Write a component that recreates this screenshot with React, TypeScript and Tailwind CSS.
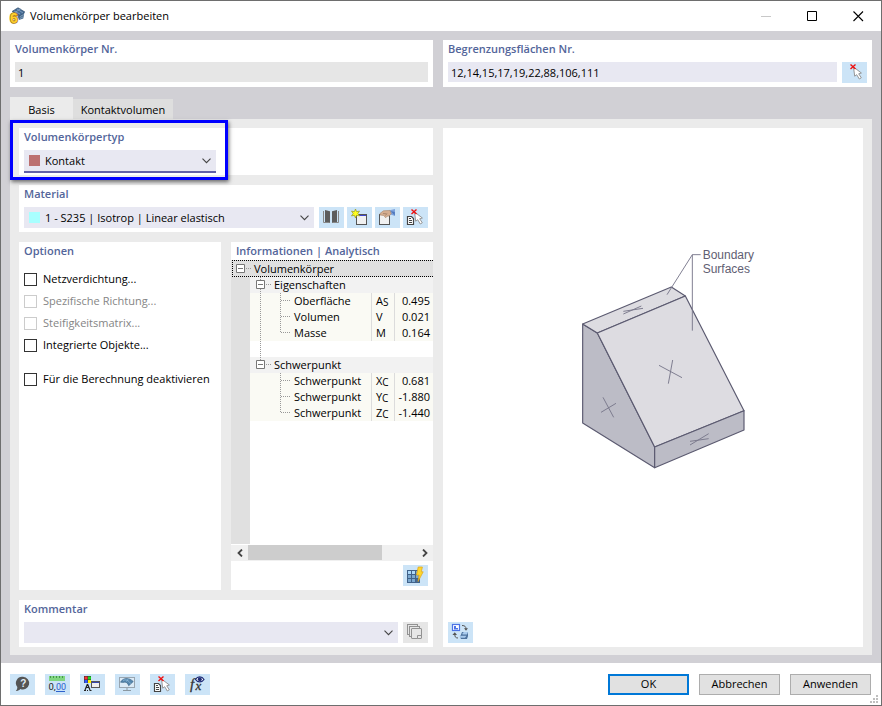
import { ReactNode } from 'react';
import clsx from 'clsx';

const Panel = ({ title, className, children }: { title?: string; className?: string; children?: ReactNode }) => (
  <section className={clsx('bg-white px-[5px] pb-1', className)}>
    {title && <h2 className="h-[22px] leading-[18px] font-semibold text-[#53659a]">{title}</h2>}
    {children}
  </section>
);

const IconButton = ({ label, disabled, children }: { label: string; disabled?: boolean; children: ReactNode }) => (
  <button
    type="button"
    aria-label={label}
    disabled={disabled}
    className={clsx('h-[21px] w-[25px] shrink-0', disabled ? 'bg-[#e6e6e6]' : 'bg-[#cce4f7] hover:bg-[#b5d8f3]')}
  >
    <svg viewBox="0 0 25 21" className="block h-[21px] w-[25px]" fill="none">
      {children}
    </svg>
  </button>
);

const Select = ({ label, value, swatch, active }: { label: string; value?: string; swatch?: string; active?: boolean }) => (
  <div className={clsx('relative min-w-0 grow bg-[#e8e8f2]', active && 'border-b-2 border-[#6161a8]')}>
    {swatch && <span className={clsx('absolute left-[5px] top-[5px] size-[11px]', swatch)} />}
    <select aria-label={label} className="block h-[21px] w-full appearance-none bg-transparent pt-px pl-[21px] pr-5 outline-none">
      <option>{value}</option>
    </select>
    <svg viewBox="0 0 9 6" className="pointer-events-none absolute right-[5px] top-[8px] h-[6px] w-[9px]" fill="none" stroke="#444">
      <path d="M.5 .7l4 4 4-4" strokeWidth="1.1" />
    </svg>
  </div>
);

/* Icons, drawn on the 25x21 button area */

const CursorX = () => (
  <>
    <path d="M11.5 5l1.2 9.2 2-1.5 2.6 4.3 2-1.2-2.6-4 2.7-.8z" fill="#fff" stroke="#8c8c8c" strokeWidth=".9" />
    <path d="M8.5 2.5l5 4.6M13.5 2.5l-5 4.6" stroke="#ee1111" strokeWidth="1.4" />
  </>
);

const DocCursor = () => (
  <>
    <path d="M4.5 9.5h4l2 2v6h-6z" fill="#fff" stroke="#444" strokeWidth="1.2" />
    <path d="M6 11.5h2M6 13.5h3M6 15.5h3" stroke="#444" />
    <CursorX />
  </>
);

const BookIcon = () => (
  <>
    <path d="M6 3l5 1.3V16l-5-1zM18 3l-5 1.3V16l5-1z" fill="#5d5d5d" />
    <path d="M4.500 4v11.500h6M19.500 4v11.500h-6" stroke="#888" />
  </>
);

const NewWindowIcon = () => (
  <>
    <rect x="9.5" y="7.5" width="10" height="10" fill="#f1f1f1" stroke="#555" />
    <path d="M12 8.5h7" stroke="#3d48cf" />
    <path d="M10 8.5h2" stroke="#fff" />
    <path d="M8.5 2l1.1 2.7 2.9-.6-1.7 2.4 1.7 2.4-2.9-.6-1.1 2.7-1.1-2.7-2.9.6 1.7-2.4-1.7-2.4 2.9.6z" fill="#ffff1e" stroke="#96961e" strokeWidth=".7" />
  </>
);

const EditWindowIcon = () => (
  <>
    <rect x="4.5" y="7.5" width="10" height="10" fill="#f1f1f1" stroke="#555" />
    <path d="M14.5 3.2L20 2v7l-4.5-1.4z" fill="#7fa3dc" />
    <path d="M15.5 4l4.3 4.6V5z" fill="#4f79bd" />
    <path d="M5 6.4l3.5-2.6 6.5-.4 1.3 3.4-2.2 2.2-2.1.2-1.3 1.6-2-2.3L5 8z" fill="#d5ae91" stroke="#a5846c" strokeWidth=".6" />
    <path d="M8 6.5l3.5.3M10.5 8.5l1.5-2" stroke="#8f6e58" strokeWidth=".6" />
  </>
);

const GridBoltIcon = () => (
  <>
    <rect x="4.5" y="5.5" width="12" height="12" fill="#7ba8cf" stroke="#41628a" />
    <path d="M5 6h3v3H5zM9 6h3v3H9z" fill="#add8f8" />
    <path d="M13 14h3v3h-3z" fill="#48678f" />
    <path d="M8.5 5v13M12.5 5v13M4 9.5h13M4 13.5h13" stroke="#41628a" />
    <path d="M15.2 2h4.2l-1.1 4.8H20.2l-5.1 9.7 1-6.4h-2.6z" fill="#ffd62c" stroke="#dfa414" strokeWidth=".7" />
  </>
);

const CopyIcon = () => (
  <g stroke="#929292" fill="#e6e6e6">
    <rect x="4.5" y="2.5" width="10" height="10" />
    <rect x="6.5" y="4.5" width="10" height="10" />
    <rect x="8.5" y="6.5" width="10" height="10" rx=".5" />
    <path d="M14.5 16.5v-3h4" />
  </g>
);

const SwapIcon = () => (
  <>
    <rect x="4.5" y="2.5" width="7" height="6" fill="#fff" stroke="#4b73e6" strokeWidth="1.2" />
    <path d="M6 4h2v2h2v1.5H6z" fill="#4b73e6" />
    <path d="M14 3.5c3 0 4 1.3 4 3.5" stroke="#555" />
    <path d="M16 6.2h4L18 8.7zM4.4 13l2.4-2.7L9 13z" fill="#555" />
    <path d="M6.8 12.5c0 2.5 1 3.5 3.2 3.5" stroke="#555" />
    <path d="M14 10h6v4l-1 3h-6l-1-2z" fill="#4d729d" />
    <path d="M14.5 11l1.5-1h4l-1 2.5h-4.5zM11.5 14.5l2-.8h5l-1.5 2h-5z" fill="#a9cbed" />
  </>
);

const HelpIcon = () => (
  <>
    <path d="M13 2.8a6.3 6.3 0 1 1-2.6 12.1C9 16.4 7.4 17 5.8 17c1-1 1.6-2.2 1.5-4A6.3 6.3 0 0 1 13 2.8z" fill="#555" />
    <text x="13.200" y="13" textAnchor="middle" fontSize="10" fontWeight="700" fill="#e2eef7" fontFamily="Liberation Sans, sans-serif">?</text>
  </>
);

const DecimalsIcon = () => (
  <>
    <path d="M4 2h16v5H4z" fill="#80d681" />
    <path d="M5.5 2v2M8.5 2v2M11.5 2v2M14.5 2v2M17.5 2v2" stroke="#45964c" />
    <text x="3.5" y="16" fontSize="9.5" fill="#222" fontFamily="Roboto, sans-serif">0,</text>
    <text x="11" y="16" fontSize="9" fill="#2d62cd" fontFamily="Roboto, sans-serif">00</text>
    <path d="M11 17.5h9" stroke="#2d62cd" />
  </>
);

const DisplayIcon = () => (
  <>
    <path d="M4 2h7v7H4z" fill="#333" />
    <path d="M4.500 2.500h3v3h-3z" fill="#f33" />
    <path d="M8 2.500h3v3H8z" fill="#1fd51f" />
    <path d="M4.500 6h3v3h-3z" fill="#2f58ff" />
    <path d="M8 6h3v3H8z" fill="#fff000" />
    <path d="M7.500 10L5 16M7.500 10l2.500 6M6 13.500h3M4 16.500h2M7 16.500h1M9.500 16.500h2" stroke="#222" strokeWidth="1.2" />
    <rect x="11.5" y="7.5" width="8" height="6" fill="#eee" stroke="#555" />
    <path d="M12 8.5h7" stroke="#3547b0" />
  </>
);

const MonitorIcon = () => (
  <>
    <rect x="4.5" y="3.5" width="15" height="10" fill="#dbeaf6" stroke="#98a5b0" />
    <path d="M12 14v3M8 16.5h8" stroke="#8b98a2" />
    <path d="M5.5 8.2c2.5-4.4 8-5.2 12.8-.7l-4.6 4.3c-.8-2.8-3-4.3-5-3.4z" fill="#5586ad" stroke="#365f83" strokeWidth=".6" />
    <path d="M8 6.5c3-1.6 5.9.1 7.5 3.1M11.5 7.5l2-3" stroke="#9fc8e5" strokeWidth=".6" />
  </>
);

const FormulaIcon = () => (
  <>
    <text x="5" y="15" fontSize="15" fontStyle="italic" fill="#333" stroke="#333" strokeWidth=".3" fontFamily="Liberation Serif, serif">f</text>
    <text x="10.5" y="16" fontSize="13" fontStyle="italic" fill="#333" stroke="#333" strokeWidth=".3" fontFamily="Liberation Serif, serif">x</text>
    <path d="M10.5 5.5c2-3.4 6.5-3.4 8.5 0-2 3.2-6.5 3.2-8.5 0z" fill="#fff" stroke="#1f2d77" strokeWidth="1.2" />
    <circle cx="14.8" cy="5.3" r="2" fill="#1f2d77" />
  </>
);

const footerTools: [string, ReactNode][] = [
  ['Hilfe', <HelpIcon />],
  ['Einheiten und Dezimalstellen', <DecimalsIcon />],
  ['Anzeigeeigenschaften', <DisplayIcon />],
  ['Darstellung', <MonitorIcon />],
  ['Auswahl aufheben', <DocCursor />],
  ['Formel', <FormulaIcon />],
];

// The yellow "6" sits in front of the roof-shaped mesh
const AppIcon = () => (
  <svg viewBox="0 0 18 18" className="size-[18px] overflow-visible" fill="none">
    <path d="M5 4l5-3 6.5 4-1.2 6.5L11 13 9 8z" fill="#4b6e91" />
    <path d="M4 4.5l6-3.8 6.8 4.2-4.8 4z" fill="#456b95" stroke="#36506d" strokeWidth=".6" />
    <path d="M6 4l6 3M9 2l6 4M7 5.5l6-4M12 9.5l4-2M12 11.5l3-1.5" stroke="#9fb9d0" strokeWidth=".6" />
    <g fontSize="14" fontWeight="700" fontFamily="Liberation Sans, sans-serif">
      <text x="2" y="16" fill="#ffd02e" stroke="#a47a14" strokeWidth="1.600" paintOrder="stroke">6</text>
    </g>
  </svg>
);

const TitleBar = () => (
  <header className="flex h-[30px] items-center bg-white pl-[7px]">
    <AppIcon />
    <h1 className="ml-1 pt-px">Volumenkörper bearbeiten</h1>
    <div className="ml-auto flex h-full">
      <button type="button" aria-label="Minimieren" disabled className="flex w-[45px] items-center justify-center text-[#c8c8c8]">
        <svg viewBox="0 0 11 11" className="size-[11px]" stroke="currentColor"><path d="M0 5.5h10" /></svg>
      </button>
      <button type="button" aria-label="Maximieren" className="flex w-[46px] items-center justify-center hover:bg-gray-200">
        <svg viewBox="0 0 11 11" className="size-[11px]" fill="none" stroke="#000"><path d="M.5 .5h9v9h-9z" /></svg>
      </button>
      <button type="button" aria-label="Schließen" className="flex w-[46px] items-center justify-center hover:bg-red-500">
        <svg viewBox="0 0 11 11" className="size-[11px]" fill="none" stroke="#000"><path d="M.5 .5l9.5 9.5M10 .5L.5 10" strokeWidth="1.1" /></svg>
      </button>
    </div>
  </header>
);

const options = [
  { label: 'Netzverdichtung...' },
  { label: 'Spezifische Richtung...', disabled: true },
  { label: 'Steifigkeitsmatrix...', disabled: true },
  { label: 'Integrierte Objekte...' },
  { label: 'Für die Berechnung deaktivieren', separated: true },
];

const Options = () => (
  <Panel title="Optionen">
    <div className="pt-1">
      {options.map(({ label, disabled, separated }) => (
        <label
          key={label}
          className={clsx('flex h-[22px] items-center gap-1.5 whitespace-nowrap', disabled && 'text-[#858585]', separated && 'mt-3')}
        >
          <input
            type="checkbox"
            disabled={disabled}
            className="size-[13px] shrink-0 appearance-none border border-[#333] bg-white checked:bg-[#6161a8] disabled:border-[#ccc]"
          />
          {label}
        </label>
      ))}
    </div>
  </Panel>
);

type Leaf = { name: string; symbol: string; sub?: string; value: string };

const groups: { name: string; rows: Leaf[] }[] = [
  {
    name: 'Eigenschaften',
    rows: [
      { name: 'Oberfläche', symbol: 'A', sub: 'S', value: '0.495' },
      { name: 'Volumen', symbol: 'V', value: '0.021' },
      { name: 'Masse', symbol: 'M', value: '0.164' },
    ],
  },
  {
    name: 'Schwerpunkt',
    rows: [
      { name: 'Schwerpunkt', symbol: 'X', sub: 'C', value: '0.681' },
      { name: 'Schwerpunkt', symbol: 'Y', sub: 'C', value: '-1.880' },
      { name: 'Schwerpunkt', symbol: 'Z', sub: 'C', value: '-1.440' },
    ],
  },
];

const TreeLines = ({ d }: { d: string }) => (
  <svg viewBox="0 0 44 16" className="h-4 w-11 shrink-0" fill="none">
    <path d={d} stroke="#999" strokeDasharray="1 1" />
  </svg>
);

const Group = ({ name, rows, last }: { name: string; rows: Leaf[]; last: boolean }) => (
  <>
    <tr className="h-4 leading-4">
      <td className="p-0" />
      <td colSpan={3} className="bg-[#f2f2f2] p-0">
        <div className="flex h-4">
          <svg viewBox="0 0 24 16" className="h-4 w-6 shrink-0" fill="none">
            <path d={last ? 'M10.5 0v4M16 7.5h5' : 'M10.5 0v16M16 7.5h5'} stroke="#999" strokeDasharray="1 1" />
            <path d="M6.5 3.5h8v8h-8zM8 7.5h5" fill="#fff" stroke="#777" />
          </svg>
          {name}
        </div>
      </td>
    </tr>
    {rows.map((row, i) => (
      <tr key={row.symbol} className="h-4 leading-4">
        <td className="p-0" />
        <td className="bg-[#fafaf4] p-0">
          <div className="flex h-4 whitespace-nowrap">
            <TreeLines d={(last ? '' : 'M10.5 0v16') + (i === rows.length - 1 ? 'M30.5 0v8M31 7.5h10' : 'M30.5 0v16M31 7.5h10')} />
            {row.name}
          </div>
        </td>
        <td className="border-l border-[#dcdcdc] bg-[#fafaf4] p-0 pl-1">
          <div className="flex h-4">
            {row.symbol}
            {row.sub && <span className="pt-px text-[10px]">{row.sub}</span>}
          </div>
        </td>
        <td className="border-l border-[#dcdcdc] bg-[#fafaf4] p-0 pr-[3px] text-right">{row.value}</td>
      </tr>
    ))}
    {!last && (
      <tr className="h-4">
        <td className="p-0" />
        <td colSpan={3} className="p-0">
          <TreeLines d="M10.5 0v16" />
        </td>
      </tr>
    )}
  </>
);

const InfoTree = () => (
  <div className="grow overflow-hidden bg-[linear-gradient(90deg,#e0e0e0_19px,#fff_19px)]">
    <table className="w-full table-fixed border-separate border-spacing-0">
      <colgroup>
        <col className="w-[19px]" />
        <col />
        <col className="w-[23px]" />
        <col className="w-[39px]" />
      </colgroup>
      <tbody>
        <tr>
          <td colSpan={4} className="p-0">
            <div className="ml-px flex h-[17px] items-center border border-r-0 border-dotted border-black bg-[#e0e0e0] leading-[15px]">
              <svg viewBox="0 0 20 15" className="h-[15px] w-5 shrink-0" fill="none">
                <path d="M13 7.5h5" stroke="#999" strokeDasharray="1 1" />
                <path d="M3.5 3.5h8v8h-8zM5 7.5h5" fill="#fff" stroke="#777" />
              </svg>
              <span className="pl-px">Volumenkörper</span>
            </div>
          </td>
        </tr>
        {groups.map((group, i) => (
          <Group key={group.name} {...group} last={i === groups.length - 1} />
        ))}
      </tbody>
    </table>
  </div>
);

const Info = () => (
  <section className="flex min-w-0 flex-col bg-white">
    <h2 className="h-[18px] pl-[5px] leading-[18px] font-semibold whitespace-nowrap text-[#53659a]">Informationen | Analytisch</h2>
    <InfoTree />
    <div className="mt-px flex h-4 bg-[#f0f0f0]">
      <button type="button" aria-label="Nach links" className="flex w-[17px] items-center justify-center">
        <svg viewBox="0 0 6 8" className="h-2 w-1.5" fill="none" stroke="#444" strokeWidth="1.8"><path d="M5 .5L1.5 4 5 7.5" /></svg>
      </button>
      <div className="grow">
        <div className="h-[15px] w-4/5 bg-[#cdcdcd]" />
      </div>
      <button type="button" aria-label="Nach rechts" className="flex w-[17px] items-center justify-center">
        <svg viewBox="0 0 6 8" className="h-2 w-1.5" fill="none" stroke="#444" strokeWidth="1.8"><path d="M1 .5L4.5 4 1 7.5" /></svg>
      </button>
    </div>
    <div className="flex justify-end px-[5px] py-1">
      <IconButton label="Berechnen"><GridBoltIcon /></IconButton>
    </div>
  </section>
);

const SolidPreview = () => (
  <svg viewBox="-63 0 624 810" className="w-[208px]" fill="none" strokeLinejoin="round">
    <g stroke="#5b5a70" strokeWidth="3.5">
      <path d="M38 252L82 279 254 621V683L38 549z" fill="#bcbcc6" />
      <path d="M38 252L304 141 346 168 82 279z" fill="#dddce1" />
      <path d="M82 279L346 168 522 512 254 621z" fill="#dddce1" />
      <path d="M254 621L522 512V570L254 683z" fill="#bcbcc6" />
    </g>
    <g stroke="#77768a" strokeWidth="2.8">
      <path d="M392 44H367L291 164M367 44V272" />
      <path d="M160 222L214 198M160 214L219 205" />
      <path d="M267 376L336 413M308 360L295 431" />
      <path d="M99 472L131 532M93 517L138 490" />
      <path d="M360 615L416 581M360 604L416 596" />
    </g>
    <g fill="#5f5e72" fontSize="36" fontFamily="Liberation Sans, Arial, sans-serif">
      <text x="398" y="58">Boundary</text>
      <text x="398" y="98">Surfaces</text>
    </g>
  </svg>
);

const dialogButton = 'h-[21px] w-[81px] bg-[#e1e1e1] hover:bg-[#e5f1fb]';

export default function App() {
  return (
    <div className="flex min-h-screen flex-col border border-[#6e6e6e] bg-[#d1d0d5] font-['Open_Sans','Segoe_UI',sans-serif] text-[11px] text-black">
      <TitleBar />

      <main className="flex grow flex-col px-[9px] pt-[9px] pb-2">
        <div className="grid grid-cols-[423fr_429fr] gap-2.5">
          <Panel title="Volumenkörper Nr." className="pb-[5px]">
            <input aria-label="Volumenkörper Nr." readOnly defaultValue="1" className="block h-5 w-full bg-[#e6e6e6] px-[3px] outline-none" />
          </Panel>
          <Panel title="Begrenzungsflächen Nr.">
            <div className="flex gap-[5px]">
              <input
                aria-label="Begrenzungsflächen Nr."
                defaultValue="12,14,15,17,19,22,88,106,111"
                className="block h-5 min-w-0 grow bg-[#e8e8f2] px-[3px] outline-none"
              />
              <IconButton label="Flächen auswählen"><CursorX /></IconButton>
            </div>
          </Panel>
        </div>

        <div role="tablist" className="mt-2.5 flex items-end">
          <button type="button" role="tab" aria-selected="true" className="h-[22px] w-[63px] bg-[#ebebeb] pt-1">Basis</button>
          <button type="button" role="tab" aria-selected="false" className="h-5 w-[100px] bg-[#dedede] pt-0.5">Kontaktvolumen</button>
        </div>

        <div className="grid grow grid-cols-[414fr_420fr] gap-2.5 bg-[#ebebeb] px-[9px] pt-[9px] pb-2">
          <div className="flex min-w-0 flex-col gap-2.5">
            <div className="grid grid-cols-2 gap-2.5 bg-white">
              <div className="relative">
                <Panel title="Volumenkörpertyp" className="h-[47px]">
                  <Select label="Volumenkörpertyp" value="Kontakt" swatch="bg-[#bc7070]" active />
                </Panel>
                <div className="pointer-events-none absolute -top-2 -right-[7px] -bottom-[5px] -left-[9px] border-3 border-[#0000ff] shadow-[1px_2px_4px_rgba(0,0,0,0.55)]" />
              </div>
            </div>

            <Panel title="Material">
              <div className="flex gap-[5px]">
                <Select label="Material" value="1 - S235 | Isotrop | Linear elastisch" swatch="bg-[#a8ffff]" />
                <div className="flex gap-[3px]">
                  <IconButton label="Materialbibliothek"><BookIcon /></IconButton>
                  <IconButton label="Neues Material"><NewWindowIcon /></IconButton>
                  <IconButton label="Material bearbeiten"><EditWindowIcon /></IconButton>
                  <IconButton label="Material auswählen"><DocCursor /></IconButton>
                </div>
              </div>
            </Panel>

            <div className="grid grow grid-cols-2 gap-2.5">
              <Options />
              <Info />
            </div>

            <Panel title="Kommentar">
              <div className="flex gap-[5px]">
                <Select label="Kommentar" />
                <IconButton label="Kommentare" disabled><CopyIcon /></IconButton>
              </div>
            </Panel>
          </div>

          <section className="flex flex-col bg-white px-[5px] pb-1">
            <div className="flex grow items-center justify-center">
              <SolidPreview />
            </div>
            <IconButton label="Ansicht wechseln"><SwapIcon /></IconButton>
          </section>
        </div>
      </main>

      <footer className="relative flex h-[42px] items-center justify-between bg-white px-[9px]">
        <div className="flex gap-2.5">
          {footerTools.map(([label, icon]) => (
            <IconButton key={label} label={label}>{icon}</IconButton>
          ))}
        </div>
        <div className="flex gap-2.5 pr-px">
          <button type="button" className={clsx(dialogButton, 'border-2 border-[#0078d7]')}>OK</button>
          <button type="button" className={clsx(dialogButton, 'border border-[#adadad]')}>Abbrechen</button>
          <button type="button" className={clsx(dialogButton, 'border border-[#adadad]')}>Anwenden</button>
        </div>
        <svg viewBox="0 0 8 8" className="absolute right-[3px] bottom-[2px] size-2" fill="#bfbfbf">
          <path d="M6 0h2v2H6zM3 3h2v2H3zM6 3h2v2H6zM0 6h2v2H0zM3 6h2v2H3zM6 6h2v2H6z" />
        </svg>
      </footer>
    </div>
  );
}
